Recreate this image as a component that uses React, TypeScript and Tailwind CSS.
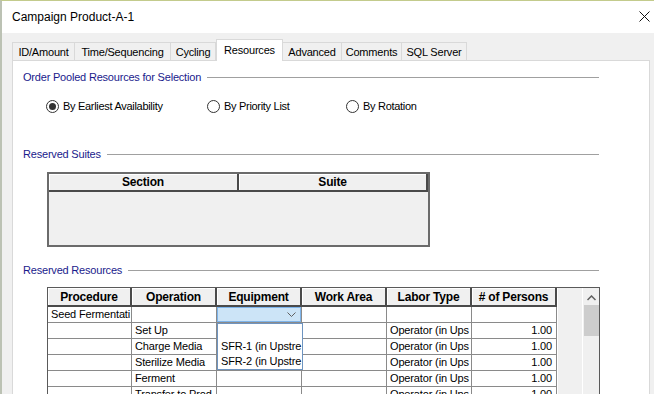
const tabs = [
  { label: 'ID/Amount', w: 'w-[63px]' },
  { label: 'Time/Sequencing', w: 'w-[96px]' },
  { label: 'Cycling', w: 'w-[45px]' },
  { label: 'Resources', w: 'w-[67px]', active: true },
  { label: 'Advanced', w: 'w-[59px]' },
  { label: 'Comments', w: 'w-[60px]' },
  { label: 'SQL Server', w: 'w-[65px]' },
];

const columns = ['Procedure', 'Operation', 'Equipment', 'Work Area', 'Labor Type', '# of Persons'];

// grid cells show only what fits, as the original grid clips its text
const rows = [
  ['Seed Fermentati', '', '', '', '', ''],
  ['', 'Set Up', '', '', 'Operator (in Ups', '1.00'],
  ['', 'Charge Media', '', '', 'Operator (in Ups', '1.00'],
  ['', 'Sterilize Media', '', '', 'Operator (in Ups', '1.00'],
  ['', 'Ferment', '', '', 'Operator (in Ups', '1.00'],
  ['', 'Transfer to Prod', '', '', 'Operator (in Ups', '1.00'],
];

function GroupLabel({ text }: { text: string }) {
  return (
    <div className="flex items-center h-[13px]">
      <span className="text-[11px] tracking-[-0.2px] text-[#1a1a8c] leading-[13px] whitespace-nowrap">{text}</span>
      <div className="flex-1 h-px bg-[#a0a0a0] ml-[6px]" />
    </div>
  );
}

function Radio({ label, checked, w }: { label: string; checked?: boolean; w: string }) {
  return (
    <div className={`flex items-center gap-[4px] ${w}`}>
      <div className="w-[13px] h-[13px] rounded-full border border-[#333] bg-white flex items-center justify-center">
        {checked ? <div className="w-[7px] h-[7px] rounded-full bg-[#333]" /> : null}
      </div>
      <span className="text-[11px] tracking-[-0.3px] text-black leading-[13px]">{label}</span>
    </div>
  );
}

function HeaderCell({ text, w }: { text: string; w: string }) {
  return (
    <div
      className={`${w} h-full flex items-center justify-center bg-[#f0f0f0] border-r-2 border-b-2 border-[#4a4a4a] shadow-[inset_1px_1px_0_#fff] text-[12px] font-bold tracking-[-0.2px] text-black`}
    >
      {text}
    </div>
  );
}

export default function App() {
  return (
    <div className="w-[654px] h-[394px] overflow-hidden bg-[#f0f0f0] flex flex-col border-t border-[#c3cb8c] border-l-2 border-l-[#bcc2b4] font-['Liberation_Sans',Arial,sans-serif]">
      {/* title bar */}
      <div className="h-[32px] shrink-0 bg-white flex items-center justify-between pl-[10px] pr-[4px]">
        <span className="text-[12px] text-black">Campaign Product-A-1</span>
        <svg width="11" height="11" viewBox="0 0 11 11" className="mb-[2px]">
          <path d="M0.5 0.5 L10.5 10.5 M10.5 0.5 L0.5 10.5" stroke="#111" strokeWidth="1" />
        </svg>
      </div>

      {/* tabs */}
      <div className="h-[27px] shrink-0 flex items-end pl-[10px]">
        {tabs.map((t) =>
          t.active ? (
            <div
              key={t.label}
              className={`${t.w} h-[22px] -mb-px relative z-10 bg-white border border-b-0 border-[#d9d9d9] flex justify-center pt-[2px] text-[11px] tracking-[-0.2px] text-black`}
            >
              {t.label}
            </div>
          ) : (
            <div
              key={t.label}
              className={`${t.w} h-[18px] bg-[#f0f0f0] border border-b-0 border-l-0 first:border-l border-[#d9d9d9] flex items-center justify-center pt-px text-[11px] tracking-[-0.2px] text-black`}
            >
              {t.label}
            </div>
          )
        )}
      </div>

      {/* panel */}
      <div className="flex-1 ml-[10px] w-[638px] bg-white border border-[#d9d9d9]">
        <div className="pl-[10px] w-[586px] flex flex-col">
          <div className="mt-[10px]">
            <GroupLabel text="Order Pooled Resources for Selection" />
          </div>
          <div className="mt-[16px] flex ml-[23px]">
            <Radio label="By Earliest Availability" checked w="w-[161px]" />
            <Radio label="By Priority List" w="w-[139px]" />
            <Radio label="By Rotation" w="w-[120px]" />
          </div>

          <div className="mt-[35px]">
            <GroupLabel text="Reserved Suites" />
          </div>
          <div className="mt-[11px] ml-[24px] w-[383px] h-[75px] border-2 border-[#6b6b6b] bg-[#f0f0f0] flex flex-col">
            <div className="h-[18px] flex">
              <HeaderCell text="Section" w="w-[190px]" />
              <HeaderCell text="Suite" w="flex-1" />
            </div>
          </div>

          <div className="mt-[17px]">
            <GroupLabel text="Reserved Resources" />
          </div>
          <div className="mt-[10px] ml-[24px] w-[553px] h-[140px] border border-[#5a5a5a] flex relative">
            <div className="w-[510px] flex flex-col">
              <div className="h-[19px] flex shrink-0">
                {columns.map((c, i) => (
                  <HeaderCell key={c} text={c} w={i === 0 ? 'w-[84px]' : 'w-[85px]'} />
                ))}
              </div>
              {rows.map((r, ri) => (
                <div key={ri} className="h-[16px] flex shrink-0">
                  {r.map((cell, ci) => (
                    <div
                      key={ci}
                      className={`${ci === 0 ? 'w-[84px]' : 'w-[85px]'} h-full bg-white border-r border-b border-[#8a8a8a] px-[3px] text-[11px] tracking-[-0.15px] leading-[15px] text-black whitespace-nowrap ${ci === 5 ? 'text-right pr-[4px]' : ''}`}
                    >
                      {ri === 0 && ci === 2 ? (
                        <div className="h-full -mx-[3px] bg-[#cce4f7] border border-[#7eb4ea] flex items-center justify-end pr-[4px]">
                          <svg width="9" height="5" viewBox="0 0 9 5">
                            <path d="M0.5 0.5 L4.5 4.5 L8.5 0.5" stroke="#606060" fill="none" strokeWidth="1" />
                          </svg>
                        </div>
                      ) : (
                        cell
                      )}
                    </div>
                  ))}
                </div>
              ))}
            </div>
            <div className="w-[25px] bg-[#f0f0f0] border-r border-white" />
            <div className="w-[16px] bg-[#f0f0f0] flex flex-col items-center">
              <svg width="9" height="6" viewBox="0 0 9 6" className="mt-[7px]">
                <path d="M0.5 5 L4.5 1 L8.5 5" stroke="#606060" fill="none" strokeWidth="1.5" />
              </svg>
              <div className="mt-[4px] w-[15px] h-[31px] bg-[#cdcdcd]" />
            </div>

            {/* open dropdown list */}
            <div className="absolute left-[169px] top-[35px] w-[86px] h-[47px] bg-white border border-[#6e94c0] flex flex-col text-[11px] tracking-[-0.15px] text-black z-20">
              <div className="h-[15px] shrink-0" />
              <div className="h-[15px] leading-[15px] pl-[3px] whitespace-nowrap">SFR-1 (in Upstre</div>
              <div className="h-[15px] leading-[15px] pl-[3px] whitespace-nowrap">SFR-2 (in Upstre</div>
            </div>
          </div>
        </div>
      </div>
    </div>
  );
}
